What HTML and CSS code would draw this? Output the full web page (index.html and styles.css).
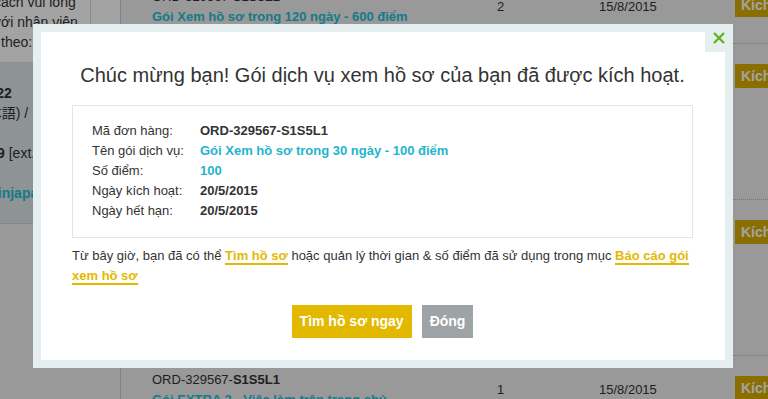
FILE: index.html
```html
<!DOCTYPE html>
<html lang="vi">
<head>
<meta charset="utf-8">
<title>Kích hoạt gói dịch vụ</title>
<link rel="stylesheet" href="styles.css">
</head>
<body>
<div class="page">
  <aside class="sidebar">
    <div class="side-top">
      <div class="notice">
        <div class="notice-text">cách vui lòng<br>với nhân viên<br>i theo:</div>
      </div>
      <div class="side-gap"></div>
    </div>
    <div class="contact">
      <div class="contact-text">
        <div class="contact-group">
          <div><b>4 0122</b></div>
          <div>(日本語) /</div>
        </div>
        <div class="contact-group">
          <div><b>(0289</b> [ext. 123]</div>
        </div>
        <div class="contact-group">
          <div class="contact-mail">ajobinjapan.com</div>
        </div>
      </div>
    </div>
  </aside>

  <main class="orders">
    <div class="row row-first">
      <div class="c-order">
        <div>ORD-329567-<b>S1S5L1</b></div>
        <div class="pkg">Gói Xem hồ sơ trong 120 ngày - 600 điểm</div>
      </div>
      <div class="c-qty">2</div>
      <div class="c-date">15/8/2015</div>
      <div class="c-act"><span class="btn-activate">Kích hoạt</span></div>
    </div>
    <div class="row row-tall">
      <div class="c-order">
        <div>ORD-329567-<b>S1S5L1</b></div>
        <div class="pkg">Gói Xem hồ sơ trong 30 ngày - 100 điểm</div>
      </div>
      <div class="c-qty">1</div>
      <div class="c-date">15/8/2015</div>
      <div class="c-act"><span class="btn-activate">Kích hoạt</span></div>
    </div>
    <div class="row row-tall">
      <div class="c-order">
        <div>ORD-329567-<b>S1S5L1</b></div>
        <div class="pkg">Gói Xem hồ sơ trong 60 ngày - 300 điểm</div>
      </div>
      <div class="c-qty">1</div>
      <div class="c-date">15/8/2015</div>
      <div class="c-act"><span class="btn-activate">Kích hoạt</span></div>
    </div>
    <div class="row">
      <div class="c-order">
        <div>ORD-329567-<b>S1S5L1</b></div>
        <div class="pkg">Gói EXTRA 2 - Việc làm trên trang chủ</div>
      </div>
      <div class="c-qty">1</div>
      <div class="c-date">15/8/2015</div>
      <div class="c-act"><span class="btn-activate">Kích hoạt</span></div>
    </div>
  </main>
</div>

<div class="overlay"></div>

<div class="modal" role="dialog">
  <button class="modal-close" type="button" aria-label="Đóng">
    <svg width="12" height="12" viewBox="0 0 12 12"><path d="M1 1 L11 11 M11 1 L1 11" stroke="#62b01f" stroke-width="2.2" fill="none"/></svg>
  </button>
  <div class="modal-body">
    <h2 class="modal-title">Chúc mừng bạn! Gói dịch vụ xem hồ sơ của bạn đã được kích hoạt.</h2>
    <dl class="info">
      <dt>Mã đơn hàng:</dt><dd class="val">ORD-329567-S1S5L1</dd>
      <dt>Tên gói dịch vụ:</dt><dd class="val val-teal">Gói Xem hồ sơ trong 30 ngày - 100 điểm</dd>
      <dt>Số điểm:</dt><dd class="val val-teal">100</dd>
      <dt>Ngày kích hoạt:</dt><dd class="val">20/5/2015</dd>
      <dt>Ngày hết hạn:</dt><dd class="val">20/5/2015</dd>
    </dl>
    <p class="note">Từ bây giờ, bạn đã có thể <a href="#">Tìm hồ sơ</a> hoặc quản lý thời gian &amp; số điểm đã sử dụng trong mục <a href="#">Báo cáo gói xem hồ sơ</a></p>
    <div class="actions">
      <button class="btn btn-primary" type="button">Tìm hồ sơ ngay</button>
      <button class="btn btn-secondary" type="button">Đóng</button>
    </div>
  </div>
</div>
</body>
</html>
```

FILE: styles.css
```css
* { box-sizing: border-box; }

html, body { margin: 0; padding: 0; }

body {
  position: relative;
  width: 768px;
  height: 399px;
  overflow: hidden;
  font-family: "Liberation Sans", Arial, "Noto Sans CJK JP", sans-serif;
  font-size: 13px;
  color: #333;
  background: #efefef;
}

/* ---------- background page ---------- */
.page {
  display: flex;
  height: 399px;
}

.sidebar {
  width: 121px;
  flex: none;
  border-right: 1px solid #c3cdd0;
  display: flex;
  flex-direction: column;
}

.side-top {
  display: flex;
  height: 62px;
  background: #fff;
}

.notice {
  width: 91px;
  flex: none;
  border-right: 1px solid #dcdcdc;
  font-size: 14px;
  line-height: 20px;
  overflow: hidden;
}

.notice-text {
  margin: -8px 0 0 -6px;
  white-space: nowrap;
}

.side-gap { flex: 1; }

.contact {
  height: 162px;
  background: #dfe6e6;
  border-bottom: 1px solid #d0d3d3;
  padding-top: 21px;
  font-size: 14px;
  line-height: 20px;
  white-space: nowrap;
  overflow: hidden;
}

.contact-text { margin-left: -31px; }

.contact-group + .contact-group { margin-top: 20px; }

.contact-mail {
  color: #24bfd3;
  font-weight: bold;
}

.orders {
  flex: 1;
  display: flex;
  flex-direction: column;
  min-width: 0;
}

.row {
  display: flex;
  flex: none;
  padding: 14px 0 16px;
  border-bottom: 1px dotted #b8b8b8;
  line-height: 20px;
}

.row-first { margin-top: -27px; }

.row-tall { height: 156px; }

.c-order {
  width: 376px;
  flex: none;
  padding-left: 31px;
  white-space: nowrap;
}

.pkg {
  color: #24bfd3;
  font-weight: bold;
}

.c-qty {
  width: 102px;
  flex: none;
  align-self: center;
}

.c-date {
  width: 136px;
  flex: none;
  align-self: center;
}

.c-act {
  flex: 1;
  padding-top: 6px;
  white-space: nowrap;
}

.btn-activate {
  display: inline-block;
  height: 24px;
  line-height: 24px;
  padding: 0 6px;
  background: #d8ac00;
  color: #fff;
  font-size: 14px;
  font-weight: bold;
}

/* ---------- overlay & modal ---------- */
.overlay {
  position: absolute;
  inset: 0;
  background: rgba(0, 0, 0, 0.36);
}

.modal {
  position: absolute;
  left: 33px;
  top: 24px;
  width: 700px;
  padding: 8px;
  background: #e6eff0;
}

.modal-close {
  position: absolute;
  top: 0;
  right: 0;
  width: 28px;
  height: 28px;
  padding: 0;
  border: 0;
  background: #e6eff0;
  display: flex;
  align-items: center;
  justify-content: center;
  cursor: pointer;
}

.modal-body {
  background: #fff;
  padding: 32px 32px 22px 31px;
}

.modal-title {
  margin: 0 0 18px;
  font-size: 20px;
  line-height: 23px;
  font-weight: normal;
  text-align: center;
  color: #333;
}

.info {
  margin: 0;
  border: 1px solid #dfe8e9;
  padding: 15px 19px 16px;
  display: grid;
  grid-template-columns: 108px 1fr;
  line-height: 20px;
}

.info dt, .info dd { margin: 0; }

.val { font-weight: bold; }

.val-teal { color: #1fb5cc; }

.note {
  margin: 8px 0 0;
  line-height: 20px;
}

.note a {
  color: #e5b800;
  font-weight: bold;
  text-decoration: none;
  border-bottom: 2px solid #e5b800;
}

.actions {
  margin-top: 19px;
  display: flex;
  justify-content: center;
  gap: 10px;
}

.btn {
  height: 33px;
  line-height: 33px;
  padding: 0 8px;
  border: 0;
  font-family: "Liberation Sans", Arial, sans-serif;
  font-size: 14px;
  font-weight: bold;
  color: #fff;
  cursor: pointer;
}

.btn-primary { background: #e3b900; }

.btn-secondary { background: #9ea3a6; }
```
